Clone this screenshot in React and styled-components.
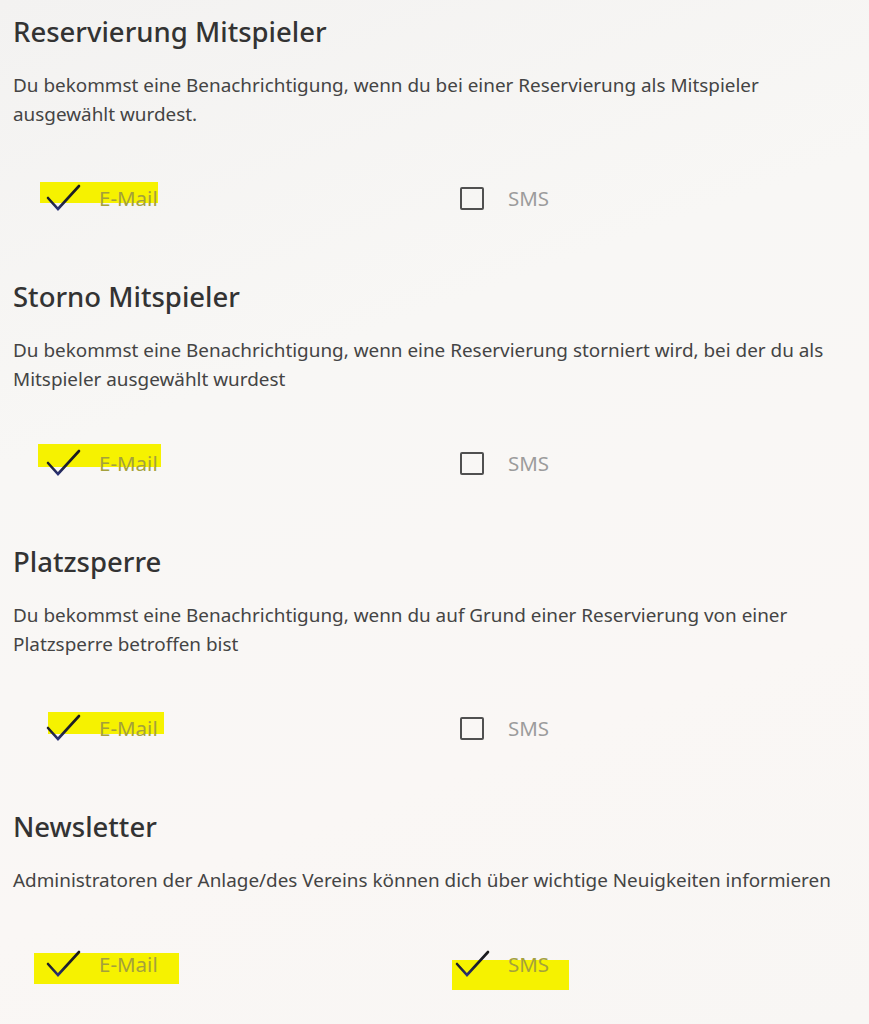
import styled, { createGlobalStyle } from 'styled-components';

const GlobalStyle = createGlobalStyle`
  html, body {
    margin: 0;
    padding: 0;
  }
  body {
    min-height: 100vh;
    background: linear-gradient(160deg, #f3f2f1 0%, #f8f7f5 35%, #faf7f5 70%, #f8f6f4 100%);
    font-family: "Noto Sans", "Open Sans", sans-serif;
    overflow: hidden;
  }
`;

// marker offsets are the hand-drawn highlight around each ticked option
const sections = [
  {
    title: 'Reservierung Mitspieler',
    text: 'Du bekommst eine Benachrichtigung, wenn du bei einer Reservierung als Mitspieler ausgewählt wurdest.',
    email: { checked: true, mark: { top: -1, bottom: 10, left: -5, right: 0 } },
    sms: { checked: false },
  },
  {
    title: 'Storno Mitspieler',
    text: 'Du bekommst eine Benachrichtigung, wenn eine Reservierung storniert wird, bei der du als Mitspieler ausgewählt wurdest',
    email: { checked: true, mark: { top: -4, bottom: 11, left: -7, right: -3 } },
    sms: { checked: false },
  },
  {
    title: 'Platzsperre',
    text: 'Du bekommst eine Benachrichtigung, wenn du auf Grund einer Reservierung von einer Platzsperre betroffen bist',
    email: { checked: true, mark: { top: -1, bottom: 9, left: 3, right: -6 } },
    sms: { checked: false },
  },
  {
    title: 'Newsletter',
    text: 'Administratoren der Anlage/des Vereins können dich über wichtige Neuigkeiten informieren',
    email: { checked: true, mark: { top: 4, bottom: -5, left: -11, right: -21 } },
    sms: { checked: true, mark: { top: 11, bottom: -11, left: -2, right: -20 } },
  },
];

function CheckIcon() {
  return (
    <svg width="36" height="28" viewBox="0 0 36 28">
      <defs>
        <linearGradient id="chk" x1="0" y1="1" x2="0" y2="0">
          <stop offset="0" stopColor="#2a3278" />
          <stop offset="0.35" stopColor="#1e2030" />
          <stop offset="1" stopColor="#1a1a1a" />
        </linearGradient>
      </defs>
      <polyline
        points="3,14 13,25 34,2"
        fill="none"
        stroke="url(#chk)"
        strokeWidth="2.6"
        strokeLinecap="round"
        strokeLinejoin="miter"
      />
    </svg>
  );
}

function Option({ label, checked, mark }) {
  return (
    <StyledOption $mark={checked ? mark : null}>
      <StyledIconBox>{checked ? <CheckIcon /> : <StyledBox />}</StyledIconBox>
      <StyledLabel $marked={checked}>{label}</StyledLabel>
    </StyledOption>
  );
}

export default function App() {
  return (
    <StyledPage>
      <GlobalStyle />
      {sections.map((s) => (
        <StyledSection key={s.title}>
          <StyledTitle>{s.title}</StyledTitle>
          <StyledText>{s.text}</StyledText>
          <StyledOptions>
            <Option label="E-Mail" {...s.email} />
            <Option label="SMS" {...s.sms} />
          </StyledOptions>
        </StyledSection>
      ))}
    </StyledPage>
  );
}

const StyledPage = styled.div`
  padding: 14px 0 0 13px;
  display: flex;
  flex-direction: column;
  gap: 66px;
`;

const StyledSection = styled.section`
  display: flex;
  flex-direction: column;
`;

const StyledTitle = styled.h2`
  margin: 0;
  font-size: 27.5px;
  font-weight: 500;
  line-height: 36px;
  color: #333333;
`;

const StyledText = styled.p`
  margin: 21px 0 0;
  font-size: 18.9px;
  line-height: 29px;
  color: #444444;
  max-width: 850px;
`;

const StyledOptions = styled.div`
  display: grid;
  grid-template-columns: 409px auto;
  justify-content: start;
  padding-left: 32px;
  margin-top: 54px;
`;

const StyledOption = styled.div`
  position: relative;
  display: flex;
  align-items: center;
  gap: 18px;
  height: 30px;
  width: fit-content;
  &::before {
    content: '';
    display: ${(p) => (p.$mark ? 'block' : 'none')};
    position: absolute;
    top: ${(p) => p.$mark?.top ?? 0}px;
    bottom: ${(p) => p.$mark?.bottom ?? 0}px;
    left: ${(p) => p.$mark?.left ?? 0}px;
    right: ${(p) => p.$mark?.right ?? 0}px;
    background: #f6f200;
  }
`;

const StyledIconBox = styled.div`
  position: relative;
  width: 36px;
  height: 28px;
  display: flex;
  align-items: center;
  justify-content: center;
`;

const StyledBox = styled.span`
  box-sizing: border-box;
  width: 24px;
  height: 23px;
  border: 2.5px solid #505050;
  border-radius: 2px;
`;

const StyledLabel = styled.span`
  position: relative;
  font-size: 20.5px;
  color: ${(p) => (p.$marked ? '#a4a13c' : '#9c9c9c')};
`;
